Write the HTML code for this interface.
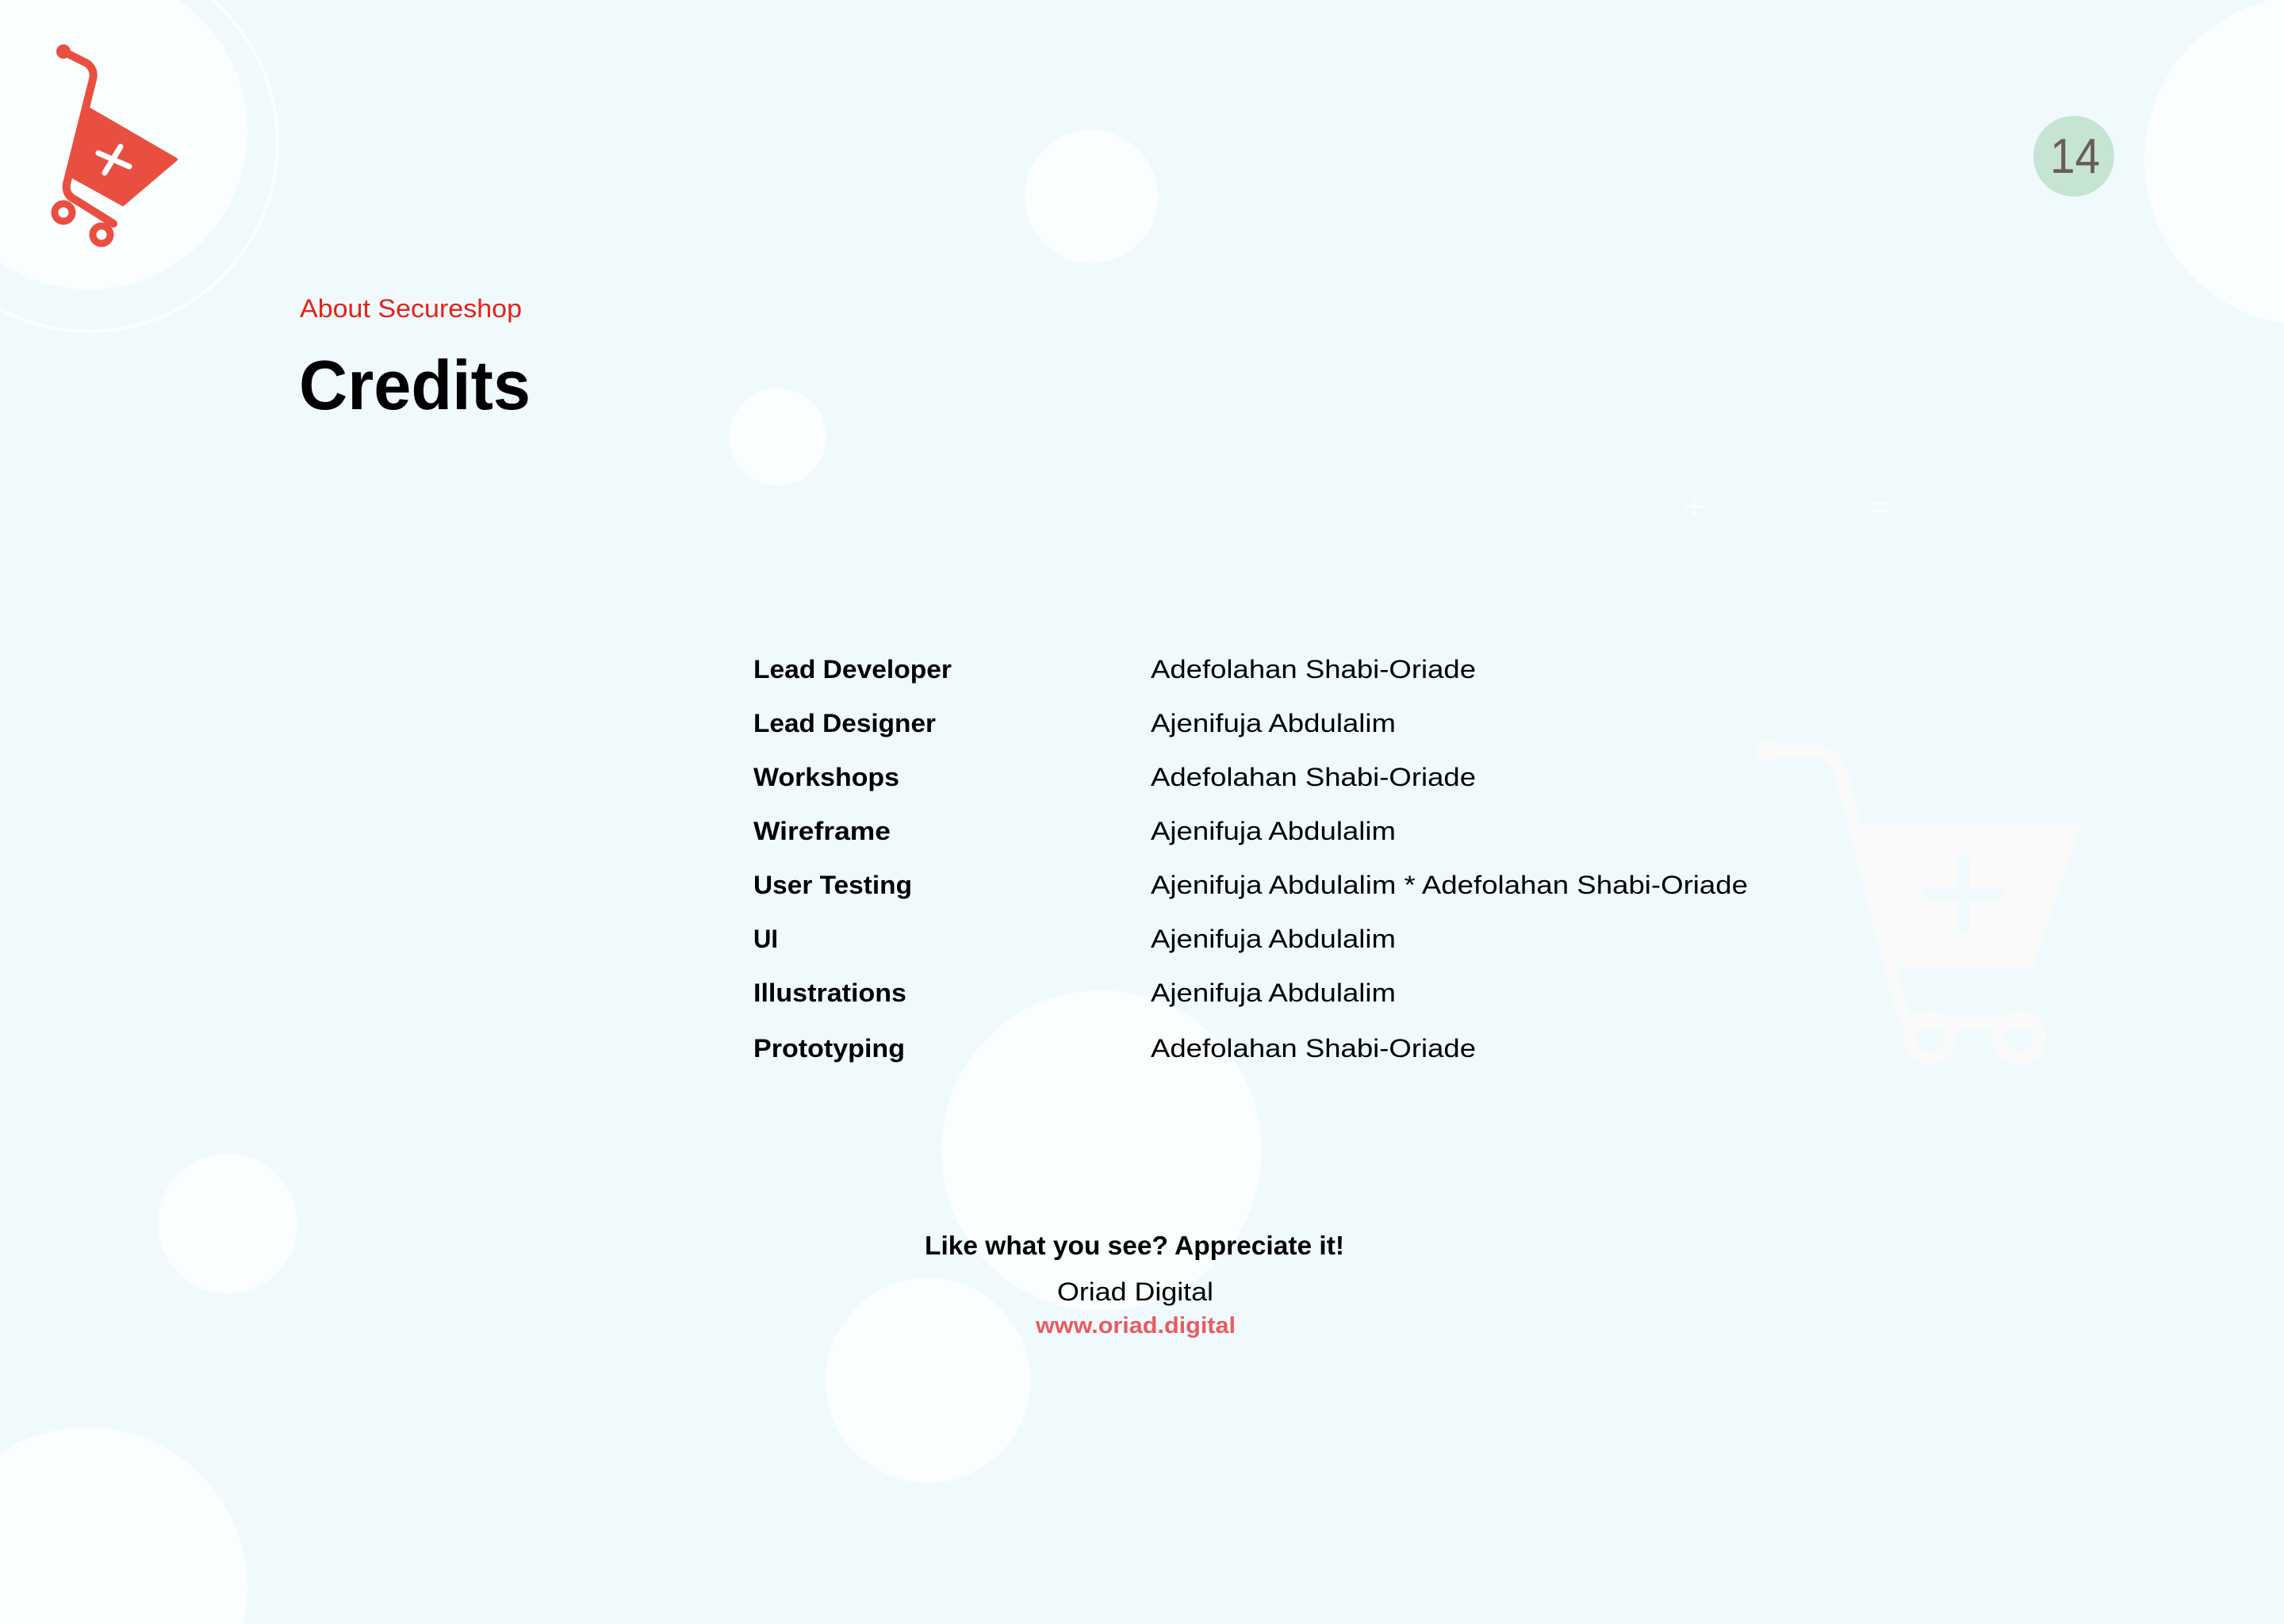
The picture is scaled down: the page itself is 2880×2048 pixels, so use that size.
<!DOCTYPE html>
<html><head><meta charset="utf-8"><style>
html,body{margin:0;padding:0;background:#f0fafc;width:2880px;height:2048px;overflow:hidden;}
svg{display:block}
text{font-family:"Liberation Sans",sans-serif;}
</style></head><body>
<svg width="2880" height="2048" viewBox="0 0 2880 2048" xmlns="http://www.w3.org/2000/svg">
<rect width="2880" height="2048" fill="#f0fafc"/>
<g fill="#fbfeff">
<circle cx="2912" cy="202" r="208"/>
<circle cx="1376" cy="248" r="84"/>
<circle cx="981" cy="551" r="61"/>
<circle cx="1389" cy="1451" r="202"/>
<circle cx="287" cy="1543" r="88"/>
<circle cx="1170" cy="1741" r="129"/>
<circle cx="110" cy="2002" r="202"/>
<circle cx="112" cy="165" r="200"/>
</g>
<circle cx="112" cy="180" r="238" fill="none" stroke="#fbfeff" stroke-width="4"/>
<!-- left cart -->
<g fill="#e94f40" stroke="#e94f40" stroke-linecap="round" stroke-linejoin="round">
<circle cx="80" cy="65" r="9" stroke="none"/>
<path d="M80 65 L110 80 Q120 88 117 100 L84 232 Q82 246 95 252 L143 282" fill="none" stroke-width="10"/>
<path d="M110 136 L222 201 L155 258 L86 220 Z" stroke-width="4"/>
<circle cx="80" cy="268" r="11" fill="none" stroke-width="9"/>
<circle cx="128" cy="296" r="11" fill="none" stroke-width="9"/>
</g>
<g stroke="#fbfeff" stroke-width="7" stroke-linecap="round">
<path d="M152 185 L132 218"/><path d="M124 193 L163 210"/>
</g>
<!-- right faded cart -->
<g fill="#fafafa" stroke="#fafafa" stroke-linecap="round" stroke-linejoin="round">
<circle cx="2227" cy="947" r="14" stroke="none"/>
<path d="M2227 947 L2290 947 Q2315 950 2322 975 L2396 1270 Q2402 1290 2420 1290 L2567 1290" fill="none" stroke-width="16"/>
<path d="M2345 1043 L2618 1043 L2560 1216 L2392 1216 Z" stroke-width="8"/>
<circle cx="2434" cy="1308" r="26" fill="none" stroke-width="16"/>
<circle cx="2546" cy="1308" r="26" fill="none" stroke-width="16"/>
</g>
<g stroke="#f0fafc" stroke-width="16" stroke-linecap="round">
<path d="M2476 1085 L2476 1170"/><path d="M2433 1128 L2520 1128"/>
</g>
<g stroke="#fbfeff" stroke-width="3"><path d="M2136 627 V651 M2124 639 H2148"/><path d="M2359 634 H2383 M2359 644 H2383"/></g>
<!-- page number -->
<circle cx="2615" cy="197" r="51" fill="#c5e5d2"/>
<text x="2585" y="218" font-size="62" fill="#6b5b5b" textLength="63" lengthAdjust="spacingAndGlyphs">14</text>
<!-- headings -->
<text x="378" y="400" font-size="32" fill="#e8201a" textLength="280" lengthAdjust="spacingAndGlyphs">About Secureshop</text>
<text x="377" y="516" font-size="88" font-weight="bold" fill="#000" textLength="292" lengthAdjust="spacingAndGlyphs">Credits</text>
<!-- table -->
<g font-size="32" font-weight="bold" fill="#000">
<text x="950" y="855" textLength="250" lengthAdjust="spacingAndGlyphs">Lead Developer</text>
<text x="950" y="923" textLength="230" lengthAdjust="spacingAndGlyphs">Lead Designer</text>
<text x="950" y="991" textLength="184" lengthAdjust="spacingAndGlyphs">Workshops</text>
<text x="950" y="1059" textLength="173" lengthAdjust="spacingAndGlyphs">Wireframe</text>
<text x="950" y="1127" textLength="200" lengthAdjust="spacingAndGlyphs">User Testing</text>
<text x="950" y="1195" textLength="31" lengthAdjust="spacingAndGlyphs">UI</text>
<text x="950" y="1263" textLength="193" lengthAdjust="spacingAndGlyphs">Illustrations</text>
<text x="950" y="1333" textLength="191" lengthAdjust="spacingAndGlyphs">Prototyping</text>
</g>
<g font-size="32" fill="#000">
<text x="1451" y="855" textLength="410" lengthAdjust="spacingAndGlyphs">Adefolahan Shabi-Oriade</text>
<text x="1451" y="923" textLength="309" lengthAdjust="spacingAndGlyphs">Ajenifuja Abdulalim</text>
<text x="1451" y="991" textLength="410" lengthAdjust="spacingAndGlyphs">Adefolahan Shabi-Oriade</text>
<text x="1451" y="1059" textLength="309" lengthAdjust="spacingAndGlyphs">Ajenifuja Abdulalim</text>
<text x="1451" y="1127" textLength="753" lengthAdjust="spacingAndGlyphs">Ajenifuja Abdulalim * Adefolahan Shabi-Oriade</text>
<text x="1451" y="1195" textLength="309" lengthAdjust="spacingAndGlyphs">Ajenifuja Abdulalim</text>
<text x="1451" y="1263" textLength="309" lengthAdjust="spacingAndGlyphs">Ajenifuja Abdulalim</text>
<text x="1451" y="1333" textLength="410" lengthAdjust="spacingAndGlyphs">Adefolahan Shabi-Oriade</text>
</g>
<!-- footer -->
<text x="1166" y="1582" font-size="33" font-weight="bold" fill="#000" textLength="529" lengthAdjust="spacingAndGlyphs">Like what you see? Appreciate it!</text>
<text x="1333" y="1640" font-size="32" fill="#000" textLength="197" lengthAdjust="spacingAndGlyphs">Oriad Digital</text>
<text x="1306" y="1681" font-size="29" font-weight="bold" fill="#ea5a5f" textLength="252" lengthAdjust="spacingAndGlyphs">www.oriad.digital</text>
</svg>
</body></html>
